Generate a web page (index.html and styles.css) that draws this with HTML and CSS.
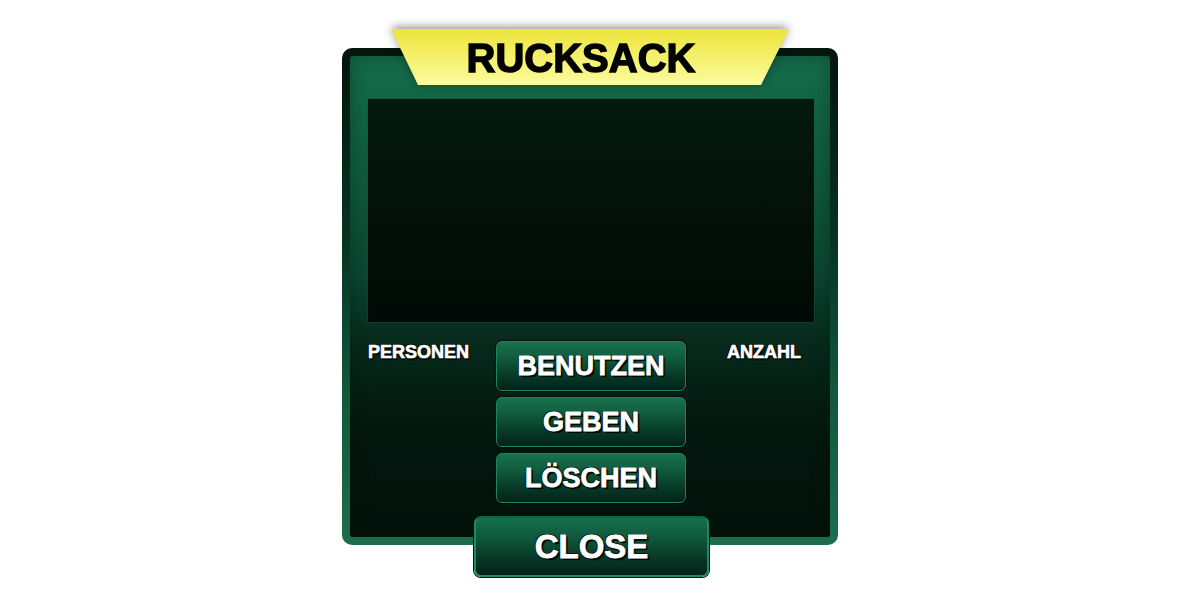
FILE: index.html
```html
<!DOCTYPE html>
<html lang="de">
<head>
<meta charset="utf-8">
<title>Rucksack</title>
<link rel="stylesheet" href="styles.css">
</head>
<body>
<div class="stage">
  <div class="panel">
    <div class="inner">
      <div class="screen"></div>
      <div class="row">
        <div class="label label-left">PERSONEN</div>
        <div class="actions">
          <div class="btn">BENUTZEN</div>
          <div class="btn">GEBEN</div>
          <div class="btn">LÖSCHEN</div>
        </div>
        <div class="label label-right">ANZAHL</div>
      </div>
    </div>
    <div class="banner-wrap">
      <div class="banner">RUCKSACK</div>
    </div>
    <div class="btn close">CLOSE</div>
  </div>
</div>
</body>
</html>
```
FILE: styles.css
```css
html, body {
  margin: 0;
  padding: 0;
  background: #ffffff;
  width: 1180px;
  height: 590px;
  overflow: hidden;
  font-family: "Liberation Sans", Arial, sans-serif;
}

.stage {
  padding-top: 48px;
  display: flex;
  justify-content: center;
}

.panel {
  position: relative;
  width: 480px;
  height: 481px;
  padding: 8px;
  border-radius: 10px;
  background: linear-gradient(to bottom, #02140d 0%, #06301f 35%, #12573c 70%, #1c6e4d 100%);
}

.inner {
  box-sizing: border-box;
  width: 480px;
  height: 481px;
  padding: 43px 16px 0 18px;
  border-radius: 3px;
  background: linear-gradient(to bottom, #146c4b 0%, #0f5a3e 25%, #0b4532 46%, #06291c 60%, #03170f 78%, #02110b 100%);
  box-shadow: inset 0 0 18px rgba(0, 20, 10, 0.35);
}

.screen {
  height: 223px;
  background: linear-gradient(to bottom, #04190f 0%, #020f09 60%, #010a06 100%);
  box-shadow: 0 0 0 1px rgba(20, 80, 55, 0.35);
}

.row {
  margin-top: 19px;
  display: grid;
  grid-template-columns: 128px 190px 1fr;
}

.label {
  color: #ffffff;
  font-weight: bold;
  font-size: 18px;
  line-height: 20px;
  padding-top: 1px;
  -webkit-text-stroke: 0.6px #ffffff;
  text-shadow: 1px 1px 0 #021008, -1px -1px 0 #021008, 1px -1px 0 #021008, -1px 1px 0 #021008, 1px 2px 1px #000;
}

.label-right {
  padding-left: 41px;
}

.actions {
  display: flex;
  flex-direction: column;
  gap: 6px;
}

.btn {
  box-sizing: border-box;
  height: 50px;
  display: flex;
  align-items: center;
  justify-content: center;
  border-radius: 6px;
  border: 1px solid #1d8358;
  box-shadow: 0 0 0 1px #02130c;
  background: linear-gradient(to bottom, #18724f 0%, #0f5a3d 35%, #073a27 70%, #03231a 100%);
  color: #ffffff;
  font-weight: bold;
  font-size: 27px;
  -webkit-text-stroke: 0.8px #ffffff;
  text-shadow: 1px 1px 0 #03140d, -1px -1px 0 #03140d, 1px -1px 0 #03140d, -1px 1px 0 #03140d, 2px 2px 1px #000;
}

.close {
  position: absolute;
  left: 132px;
  top: 468px;
  width: 235px;
  height: 61px;
  font-size: 33px;
  border-radius: 7px;
  border: 2px solid #1f8a5c;
  border-top-color: #14603f;
  background: linear-gradient(to bottom, #16704e 0%, #0e583c 35%, #073927 70%, #03231a 100%);
}

.banner-wrap {
  position: absolute;
  left: 49px;
  top: -19px;
  width: 398px;
  height: 56px;
  filter: drop-shadow(0 -2px 5px rgba(0, 0, 0, 0.45));
}

.banner {
  width: 100%;
  height: 100%;
  clip-path: polygon(0 0, 100% 0, 370px 100%, 27px 100%);
  background: linear-gradient(to bottom, #ece43c 0%, #f4ef66 45%, #fbfb9e 100%);
  display: flex;
  align-items: center;
  justify-content: center;
  padding: 2px 18px 0 0;
  box-sizing: border-box;
  color: #000000;
  font-weight: bold;
  font-size: 40px;
  -webkit-text-stroke: 1.4px #000;
}
```
